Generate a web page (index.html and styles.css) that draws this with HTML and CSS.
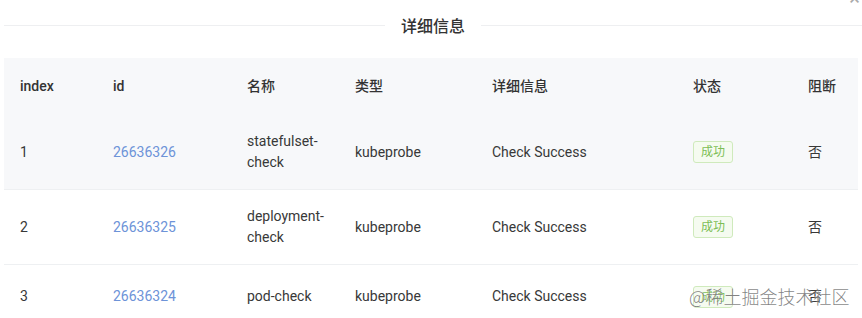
FILE: index.html
```html
<!DOCTYPE html>
<html lang="zh">
<head>
<meta charset="utf-8">
<link rel="stylesheet" href="styles.css">
</head>
<body>
<div class="modal">
  <span class="close">×</span>
  <div class="divider">
    <span class="line"></span>
    <span class="title">详细信息</span>
    <span class="line"></span>
  </div>
  <table class="table">
    <colgroup>
      <col class="c1"><col class="c2"><col class="c3"><col class="c4"><col class="c5"><col class="c6"><col class="c7">
    </colgroup>
    <thead>
      <tr><th>index</th><th>id</th><th>名称</th><th>类型</th><th>详细信息</th><th>状态</th><th>阻断</th></tr>
    </thead>
    <tbody>
      <tr class="hover">
        <td>1</td><td><a class="link">26636326</a></td><td class="name">statefulset-check</td><td>kubeprobe</td><td>Check Success</td><td><span class="tag">成功</span></td><td>否</td>
      </tr>
      <tr>
        <td>2</td><td><a class="link">26636325</a></td><td class="name">deployment-check</td><td>kubeprobe</td><td>Check Success</td><td><span class="tag">成功</span></td><td>否</td>
      </tr>
      <tr>
        <td>3</td><td><a class="link">26636324</a></td><td class="name">pod-check</td><td>kubeprobe</td><td>Check Success</td><td><span class="tag">成功</span></td><td>否</td>
      </tr>
    </tbody>
  </table>
  <div class="watermark">@稀土掘金技术社区</div>
</div>
</body>
</html>
```
FILE: styles.css
```css
* { box-sizing: border-box; }
html, body { margin: 0; padding: 0; background: #fff; overflow: hidden; }
body {
  width: 862px; height: 318px;
  font-family: Roboto, "Noto Sans CJK SC", sans-serif;
  font-size: 14px; color: #333;
}
.modal { position: relative; padding-left: 4px; height: 318px; }
.close {
  position: absolute; right: 2px; top: -12px;
  font-size: 20px; color: #aaa; line-height: 20px;
}
.divider {
  display: flex; align-items: center;
  height: 50px;
}
.divider .line { flex: 1; height: 1px; background: #eeeff1; }
.divider .title {
  padding: 0 16px; font-size: 16px; font-weight: 500; color: #333;
  font-family: "Noto Sans CJK SC", sans-serif; line-height: 22px;
}
.table {
  border-collapse: collapse; table-layout: fixed;
  width: 854px; margin-top: 8px;
}
.c1 { width: 93px; } .c2 { width: 134px; } .c3 { width: 108px; }
.c4 { width: 137px; } .c5 { width: 201px; } .c6 { width: 115px; } .c7 { width: 66px; }
th {
  background: #f7f8fa; text-align: left; font-weight: 500;
  padding: 18px 16px; line-height: 21px; color: #333;
}
td {
  padding: 16px 16px; line-height: 21px; height: 64px;
  border-bottom: 1px solid #eef0f2; vertical-align: middle;
  overflow-wrap: break-word; color: #383838;
}
td.name { padding-right: 8px; }
tr.hover td { background: #f7f8fa; }
.link { color: #6d93d8; text-decoration: none; }
.tag {
  display: inline-block; padding: 0 7px; height: 22px; line-height: 20px;
  border: 1px solid #cfeabc; background: #f5fbf0; color: #7dbe55;
  font-size: 12px; border-radius: 3px;
}
.watermark {
  position: absolute; left: 689px; top: 284px;
  font-size: 18px; line-height: 24px; color: rgba(90, 90, 90, 0.75);
  font-weight: 300; font-family: "Noto Sans CJK SC", sans-serif;
  text-shadow: 0 0 2px #fff;
}
```
